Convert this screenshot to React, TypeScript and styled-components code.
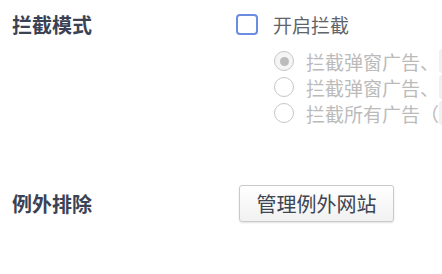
import React from "react";
import styled, { createGlobalStyle } from "styled-components";

const GlobalStyle = createGlobalStyle`
  html, body {
    margin: 0;
    padding: 0;
    background: #ffffff;
    overflow: hidden;
  }
  body {
    font-family: "Noto Sans CJK SC", "Noto Sans", "Liberation Sans", sans-serif;
  }
`;

const options = [
  { text: "拦截弹窗广告、", checked: true },
  { text: "拦截弹窗广告、", checked: false },
  { text: "拦截所有广告（", checked: false },
];

const App = () => {
  return (
    <>
      <GlobalStyle />
      <Page>
        <Section>
          <Label>拦截模式</Label>
          <Controls>
            <CheckRow>
              <CheckBox />
              <CheckText>开启拦截</CheckText>
            </CheckRow>
            <RadioList>
              {options.map((o, i) => (
                <RadioRow key={i}>
                  <Radio checked={o.checked} />
                  <RadioText>{o.text}</RadioText>
                  <Hint />
                </RadioRow>
              ))}
            </RadioList>
          </Controls>
        </Section>
        <ExceptSection>
          <Label>例外排除</Label>
          <Controls>
            <Button>管理例外网站</Button>
          </Controls>
        </ExceptSection>
      </Page>
    </>
  );
};

export default App;

export const Page = styled.div`
  width: 442px;
  height: 274px;
  padding: 11px 0 0 12px;
  box-sizing: border-box;
  overflow: hidden;
`;

export const Section = styled.div`
  display: grid;
  grid-template-columns: 224px 1fr;
  align-items: start;
`;

export const ExceptSection = styled(Section)`
  margin-top: 59px;
  align-items: center;
`;

export const Label = styled.div`
  height: 26px;
  display: flex;
  align-items: center;
  font-size: 20px;
  font-weight: 700;
  color: #3b4253;
  white-space: nowrap;
`;

export const Controls = styled.div`
  display: flex;
  flex-direction: column;
  min-width: 0;
`;

export const CheckRow = styled.div`
  height: 26px;
  display: flex;
  align-items: center;
`;

export const CheckBox = styled.span`
  width: 22px;
  height: 21px;
  border: 2px solid #6a8ddf;
  border-radius: 4px;
  background: #fff;
  box-sizing: border-box;
`;

export const CheckText = styled.span`
  margin-left: 15px;
  font-size: 19px;
  color: #5f646b;
`;

export const RadioList = styled.div`
  margin-top: 11px;
  padding-left: 38px;
  display: flex;
  flex-direction: column;
`;

export const RadioRow = styled.div`
  height: 26px;
  display: flex;
  align-items: center;
  white-space: nowrap;
`;

export const Radio = styled.span<{ checked: boolean }>`
  flex: none;
  width: 20px;
  height: 20px;
  border: 1.5px solid #c6c6c6;
  border-radius: 50%;
  box-sizing: border-box;
  background: ${(p) => (p.checked ? "#f5f5f5" : "#fff")};
  display: flex;
  align-items: center;
  justify-content: center;
  &::after {
    content: "";
    width: 9px;
    height: 9px;
    border-radius: 50%;
    background: #bcbcbc;
    display: ${(p) => (p.checked ? "block" : "none")};
  }
`;

export const RadioText = styled.span`
  margin-left: 12px;
  font-size: 19px;
  color: #bbbbbb;
`;

export const Hint = styled.span`
  flex: none;
  width: 60px;
  height: 24px;
  border-radius: 3px;
  background: #f1f1f1;
`;

export const Button = styled.button`
  align-self: flex-start;
  width: 155px;
  height: 37px;
  margin-left: 3px;
  padding: 0;
  border: 1px solid #c9c9c9;
  border-radius: 3px;
  background: linear-gradient(#ffffff, #f1f1f1);
  box-shadow: 0 1px 2px rgba(0, 0, 0, 0.12);
  font-family: inherit;
  font-size: 20px;
  color: #3d4452;
  cursor: pointer;
`;
